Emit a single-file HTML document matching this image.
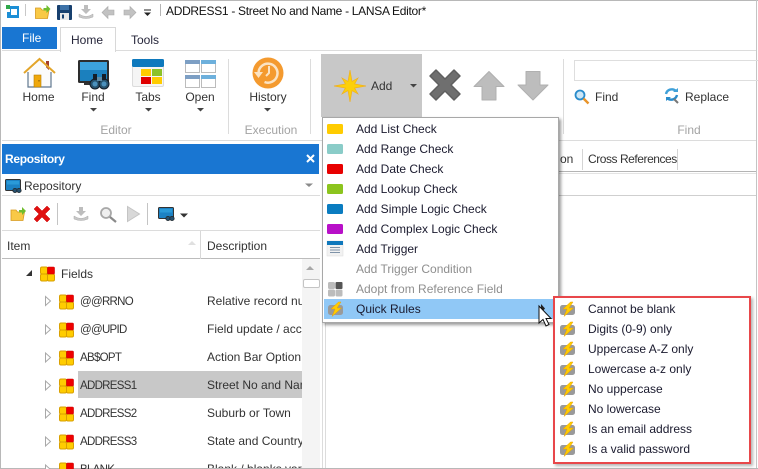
<!DOCTYPE html>
<html><head><meta charset="utf-8">
<style>
html,body{margin:0;padding:0;background:#fff}
#r{position:relative;width:758px;height:469px;overflow:hidden;background:#fff;font-family:"Liberation Sans",sans-serif;font-size:12px;color:#333}
.t{position:absolute;white-space:nowrap;line-height:16px}
.b{position:absolute}
.c{transform:translateX(-50%)}
.g{color:#a3a3a3}
.m{color:#1a1a2e}
.d{color:#8e8e8e}
.k{font-size:11.5px;letter-spacing:-.7px}
svg{position:absolute;left:0;top:0}
</style></head><body><div id="r">

<!-- base lines -->
<div class="b" style="left:2px;top:50px;width:754px;height:1px;background:#dcdcdc"></div>
<div class="b" style="left:2px;top:140px;width:754px;height:1px;background:#dcdcdc"></div>
<div class="b" style="left:0;top:0;width:758px;height:1px;background:#b8b8b8"></div>
<div class="b" style="left:0;top:0;width:1px;height:469px;background:#b8b8b8"></div>
<div class="b" style="left:756px;top:0;width:1px;height:469px;background:#c4c4c4"></div>
<div class="b" style="left:0;top:468px;width:758px;height:1px;background:#b8b8b8"></div>

<!-- tabs -->
<div class="b" style="left:2px;top:27px;width:55px;height:22px;background:#1976d2"></div>
<div class="t" style="left:22px;top:30px;color:#fff">File</div>
<div class="b" style="left:60px;top:27px;width:54px;height:24px;background:#fff;border:1px solid #d8d8d8;border-bottom:0;box-sizing:content-box"></div>
<div class="t" style="left:71px;top:32px;color:#26263a">Home</div>
<div class="t" style="left:131px;top:32px;color:#26263a">Tools</div>
<div class="t" style="left:166px;top:3px;color:#111;letter-spacing:-.3px">ADDRESS1 - Street No and Name - LANSA Editor*</div>

<!-- ribbon labels -->
<div class="t c" style="left:38.500px;top:89px">Home</div>
<div class="t c" style="left:93px;top:89px">Find</div>
<div class="t c" style="left:148px;top:89px">Tabs</div>
<div class="t c" style="left:200px;top:89px">Open</div>
<div class="t c" style="left:268px;top:89px">History</div>
<div class="t c g" style="left:116px;top:122px">Editor</div>
<div class="t c g" style="left:271px;top:122px">Execution</div>

<!-- add button -->
<div class="b" style="left:321px;top:54px;width:101px;height:63px;background:#c8c8c8"></div>
<div class="t" style="left:371px;top:78px">Add</div>

<!-- find group -->
<div class="b" style="left:574px;top:60px;width:190px;height:19px;border:1px solid #dedede"></div>
<div class="t" style="left:595px;top:89px">Find</div>
<div class="t" style="left:685px;top:89px">Replace</div>
<div class="t c g" style="left:689px;top:122px">Find</div>

<!-- right tabs -->
<div class="t" style="left:560px;top:151px">on</div>
<div class="t" style="left:588px;top:151px;letter-spacing:-.45px">Cross References</div>
<div class="b" style="left:582px;top:149px;width:1px;height:21px;background:#d4d4d4"></div>
<div class="b" style="left:677px;top:149px;width:1px;height:21px;background:#d4d4d4"></div>
<div class="b" style="left:558px;top:171px;width:198px;height:1px;background:#b4b4b4"></div>
<div class="b" style="left:558px;top:173px;width:198px;height:1px;background:#e4e4e4"></div>
<div class="b" style="left:558px;top:195px;width:198px;height:1px;background:#cfcfcf"></div>
<div class="b" style="left:322px;top:320px;width:1px;height:148px;background:#dcdcdc"></div>
<div class="b" style="left:325px;top:320px;width:1px;height:148px;background:#dcdcdc"></div>

<!-- repository panel -->
<div class="b" style="left:2px;top:144px;width:317px;height:30px;background:#1976d2"></div>
<div class="t" style="left:5px;top:151px;color:#fff;font-weight:bold;letter-spacing:-.3px">Repository</div>
<div class="t" style="left:24px;top:178px">Repository</div>
<div class="b" style="left:2px;top:195px;width:318px;height:1px;background:#dcdcdc"></div>
<div class="b" style="left:2px;top:230px;width:318px;height:1px;background:#dcdcdc"></div>
<div class="b" style="left:2px;top:258px;width:318px;height:1px;background:#bcbcbc"></div>
<div class="b" style="left:200px;top:231px;width:1px;height:28px;background:#d8d8d8"></div>
<div class="t" style="left:7px;top:238px">Item</div>
<div class="t" style="left:207px;top:238px">Description</div>

<!-- scrollbar + selection -->
<div class="b" style="left:78px;top:371px;width:224px;height:27px;background:#c8c8c8"></div>
<div class="b" style="left:302px;top:259px;width:18px;height:209px;background:#f4f4f4"></div>
<div class="b" style="left:303px;top:279px;width:15px;height:7px;background:#fff;border:1px solid #c4c4c4;border-radius:2px"></div>

<!-- tree -->
<div class="t" style="left:61px;top:266px">Fields</div>
<div class="t k" style="left:80px;top:294px">@@RRNO</div>
<div class="t k" style="left:80px;top:322px">@@UPID</div>
<div class="t k" style="left:80px;top:350px">AB$OPT</div>
<div class="t k" style="left:80px;top:378px">ADDRESS1</div>
<div class="t k" style="left:80px;top:406px">ADDRESS2</div>
<div class="t k" style="left:80px;top:434px">ADDRESS3</div>
<div class="t k" style="left:80px;top:462px">BLANK</div>
<div class="b" style="left:207px;top:290px;width:95px;height:178px;overflow:hidden">
<div class="t" style="left:0;top:3px">Relative record number</div>
<div class="t" style="left:0;top:31px">Field update / access</div>
<div class="t" style="left:0;top:59px">Action Bar Option</div>
<div class="t" style="left:0;top:87px">Street No and Name</div>
<div class="t" style="left:0;top:115px">Suburb or Town</div>
<div class="t" style="left:0;top:143px">State and Country</div>
<div class="t" style="left:0;top:171px">Blank / blanks variable</div>
</div>

<!-- icons base layer -->
<svg width="758" height="469" viewBox="0 0 758 469">
<defs>
<g id="fld"><rect x="0" y="0" width="7" height="7" rx="1.500" fill="#fc0" stroke="#d9a000"/><rect x="7" y="7" width="7" height="7" rx="1.500" fill="#fc0" stroke="#d9a000"/><rect x="0" y="7" width="7" height="7" rx="1.500" fill="#fc0" stroke="#d9a000"/><rect x="7" y="0" width="7" height="7" rx="1" fill="#e00" stroke="#c00" stroke-width=".6"/></g>
<path id="tri" d="M0 0l5 4.500l-5 4.500z" fill="#fff" stroke="#a8a8a8"/>
<g id="mon"><rect x=".5" y=".5" width="15" height="11" rx="1" fill="#1c82c4" stroke="#333"/><rect x="2" y="2" width="12" height="3.500" fill="#2a9ad8"/><circle cx="10" cy="11.500" r="2.200" fill="#26506e" stroke="#222" stroke-width=".7"/><circle cx="14" cy="11.500" r="2.200" fill="#26506e" stroke="#222" stroke-width=".7"/></g>
<g id="folder"><path d="M1 4h5l1.500 2h7l-1.500 8.500h-12z" fill="#f9c946" stroke="#d79a20" stroke-width=".8"/><path d="M9 4h3V1l4 4l-4 4V6.500H9z" fill="#6fbd2e"/></g>
<g id="dl"><path d="M6 1h4v4h3l-5 5l-5-5h3z" fill="#bdbdbd"/><path d="M1 10q7 5 14 0v3q-7 3-14 0z" fill="#c8c8c8" stroke="#aaa" stroke-width=".5"/></g>
</defs>

<!-- title bar -->
<rect x="7" y="6" width="12" height="12" fill="#1c8fd6"/><rect x="11" y="9" width="6" height="6" fill="#fff"/><rect x="6" y="5" width="4" height="4" fill="#2fa84a"/><rect x="6" y="9" width="4" height="3" fill="#fff"/>
<rect x="25" y="4" width="1" height="12" fill="#c8c8c8"/>
<use href="#folder" x="34.500" y="4"/>
<rect x="57" y="5" width="15" height="15" rx="1" fill="#17406e"/><rect x="60" y="5" width="9" height="5" fill="#3d72a8"/><rect x="60" y="13" width="9" height="7" fill="#e8e8e8"/><rect x="62" y="14.500" width="2" height="4" fill="#17406e"/>
<use href="#dl" x="78" y="4"/>
<path d="M102 12.500l6-6v3.500h6v5h-6v3.500z" fill="#c2c2c2" stroke="#aaa" stroke-width=".6"/>
<path d="M136 12.500l-6-6v3.500h-6v5h6v3.500z" fill="#c2c2c2" stroke="#aaa" stroke-width=".6"/>
<path d="M144 12.500h7l-3.500 3.500z" fill="#222"/><rect x="144" y="9.500" width="7" height="1" fill="#222"/>
<rect x="160" y="4" width="1" height="12" fill="#b4b4b4"/>

<!-- home -->
<rect x="46" y="61" width="3" height="9" fill="#a33c2e"/>
<path d="M28 72v15h23V72l-11.500-11z" fill="#fbfbfb"/>
<path d="M28 72v15h23V72" fill="none" stroke="#607890" stroke-width="1.200"/>
<path d="M24 73l15.500-14l15.500 14" fill="none" stroke="#e3a52a" stroke-width="2"/>
<rect x="34" y="75" width="7" height="12" fill="#efa80c" stroke="#b87d00" stroke-width=".6"/>
<rect x="38.500" y="80" width="1" height="1.500" fill="#7a5000"/>
<!-- find -->
<rect x="78" y="60" width="31" height="23" rx="1.500" fill="#2d2d2d"/>
<rect x="80" y="62" width="27" height="19" fill="#1b80be"/>
<rect x="80" y="62" width="27" height="8" fill="#3ca2dc"/>
<rect x="84" y="83" width="12" height="2" fill="#333"/>
<circle cx="95" cy="84" r="5" fill="#27536f" stroke="#151e28"/><circle cx="104" cy="84" r="5" fill="#27536f" stroke="#151e28"/><circle cx="95" cy="84" r="2.500" fill="#4b91bd"/><circle cx="104" cy="84" r="2.500" fill="#4b91bd"/>
<rect x="93" y="74" width="4" height="6" fill="#151e28"/><rect x="102" y="74" width="4" height="6" fill="#151e28"/><rect x="97" y="77" width="5" height="4" fill="#5e8ba6"/>
<!-- tabs -->
<rect x="132.500" y="59.500" width="31" height="27" rx="1.500" fill="#f5f5f5" stroke="#dcdcdc"/>
<rect x="132" y="59" width="32" height="8" rx="1.500" fill="#0e79bd"/>
<rect x="141" y="69" width="10" height="7" fill="#fc0"/><rect x="152" y="69" width="10" height="7" fill="#8cc228"/><rect x="141" y="77" width="10" height="7" fill="#e00000"/><rect x="152" y="77" width="10" height="7" fill="#fc0"/>
<!-- open -->
<g fill="#fff" stroke="#bcbcbc"><rect x="185.500" y="60.500" width="14" height="12"/><rect x="201.500" y="60.500" width="14" height="12"/><rect x="185.500" y="75.500" width="14" height="12"/><rect x="201.500" y="75.500" width="14" height="12"/></g>
<rect x="185" y="60" width="15" height="4" fill="#7d9fc4"/><rect x="201" y="60" width="15" height="4" fill="#6db0dc"/><rect x="185" y="75" width="15" height="4" fill="#7d9fc4"/><rect x="201" y="75" width="15" height="4" fill="#6db0dc"/>
<!-- history -->
<circle cx="268" cy="73" r="15.500" fill="#f49a2f"/>
<path d="M258.500 73a9.500 9.500 0 1 1 6 9" fill="none" stroke="#fbe3c3" stroke-width="2.500"/>
<path d="M254 72h9l-4.500 6z" fill="#fbe3c3"/>
<path d="M269 66v7l-3 3" fill="none" stroke="#fbe3c3" stroke-width="2"/>
<!-- seps -->
<rect x="228" y="59" width="1" height="75" fill="#dcdcdc"/><rect x="310" y="59" width="1" height="75" fill="#dcdcdc"/><rect x="563" y="59" width="1" height="75" fill="#dcdcdc"/>
<!-- carets -->
<g fill="#444"><path d="M90 108h7l-3.500 3.500z"/><path d="M145 108h7l-3.500 3.500z"/><path d="M197 108h7l-3.500 3.500z"/><path d="M264 108h7l-3.500 3.500z"/><path d="M410 84h7l-3.500 3.500z"/></g>
<!-- star -->
<path d="M350 70L352 81.400L358 78L354.600 84L366 86L354.600 88L358 94L352 90.600L350 102L348 90.600L342 94L345.400 88L334 86L345.400 84L342 78L348 81.400Z" fill="#fcd00a" stroke="#f0b020" stroke-width=".7"/>
<!-- X up down -->
<path d="M436 70l9 9l9-9l6 6l-9 9l9 9l-6 6l-9-9l-9 9l-6-6l9-9l-9-9z" fill="#6f6f6f" stroke="#5f5f5f" stroke-linejoin="round" stroke-width="1.500"/>
<path d="M489 71.500l15 15h-8v13.500h-14v-13.500h-8z" fill="#bdbdbd" stroke="#b0b0b0" stroke-linejoin="round"/>
<path d="M526 71.500h14v13.500h8l-15 15l-15-15h8z" fill="#bdbdbd" stroke="#b0b0b0" stroke-linejoin="round"/>
<!-- find icons -->
<circle cx="580" cy="95" r="4.500" fill="#cde7f7" stroke="#2a8ccb" stroke-width="1.800"/><path d="M583.500 98.500l5 5" stroke="#e8942a" stroke-width="2.400"/>
<path d="M666 94a6 6 0 0 1 10-3" fill="none" stroke="#3fa0d8" stroke-width="2.400"/><path d="M677 95a6 6 0 0 1-10 3" fill="none" stroke="#2a8ccb" stroke-width="2.400"/><path d="M673 92h5v-4z" fill="#3fa0d8"/><path d="M671 97h-5v4z" fill="#2a8ccb"/><path d="M674 99l4 4" stroke="#777" stroke-width="2"/>

<!-- repository -->
<path d="M307 155l7 7M314 155l-7 7" stroke="#fff" stroke-width="2"/>
<use href="#mon" x="5" y="179"/>
<path d="M305 183.500h8l-4 3.500z" fill="#8a8a8a"/>
<use href="#folder" x="10" y="206"/>
<path d="M37 206l5 5l5-5l3 3l-5 5l5 5l-3 3l-5-5l-5 5l-3-3l5-5l-5-5z" fill="#e01010" stroke="#c00" stroke-width=".5"/>
<rect x="57" y="203" width="1" height="22" fill="#c4c4c4"/>
<use href="#dl" x="73" y="206"/>
<circle cx="106" cy="213" r="5" fill="#efefef" stroke="#a8a8a8" stroke-width="1.800"/><path d="M110 217l6 5" stroke="#8a8a8a" stroke-width="2.200"/>
<path d="M127.500 206.500l12 7.500l-12 7.500z" fill="#d8d8d8" stroke="#c4c4c4"/>
<rect x="147" y="203" width="1" height="22" fill="#c4c4c4"/>
<use href="#mon" x="158" y="207"/>
<path d="M180 213.500h8l-4 4z" fill="#333"/>
<path d="M188 245h8l-4-4z" fill="#e0e0e0"/>
<path d="M306 270h8l-4-4z" fill="#a8a8a8"/>

<!-- tree icons -->
<path d="M32 270v6h-6z" fill="#333"/>
<use href="#fld" x="40.500" y="267"/>
<g><use href="#tri" x="45.500" y="296.500"/><use href="#tri" x="45.500" y="325"/><use href="#tri" x="45.500" y="353"/><use href="#tri" x="45.500" y="381"/><use href="#tri" x="45.500" y="409"/><use href="#tri" x="45.500" y="437"/><use href="#tri" x="45.500" y="465"/></g>
<use href="#fld" x="59.500" y="295"/><use href="#fld" x="59.500" y="323"/><use href="#fld" x="59.500" y="351"/><use href="#fld" x="59.500" y="379"/><use href="#fld" x="59.500" y="407"/><use href="#fld" x="59.500" y="435"/><use href="#fld" x="59.500" y="463"/>
</svg>

<!-- main menu -->
<div class="b" style="left:322px;top:117px;width:235px;height:204px;background:#fff;border:1px solid #a8a8a8;box-shadow:2px 2px 3px rgba(0,0,0,.4)"></div>
<div class="b" style="left:324px;top:299px;width:229px;height:20px;background:#90c8f6"></div>
<div class="t m" style="left:356px;top:121px">Add List Check</div>
<div class="t m" style="left:356px;top:141px">Add Range Check</div>
<div class="t m" style="left:356px;top:161px">Add Date Check</div>
<div class="t m" style="left:356px;top:181px">Add Lookup Check</div>
<div class="t m" style="left:356px;top:201px">Add Simple Logic Check</div>
<div class="t m" style="left:356px;top:221px">Add Complex Logic Check</div>
<div class="t m" style="left:356px;top:241px">Add Trigger</div>
<div class="t d" style="left:356px;top:261px">Add Trigger Condition</div>
<div class="t d" style="left:356px;top:281px">Adopt from Reference Field</div>
<div class="t m" style="left:356px;top:301px">Quick Rules</div>

<!-- sub menu -->
<div class="b" style="left:553px;top:296px;width:194px;height:164px;background:#fff;border:2px solid #e8474a;box-shadow:2px 2px 3px rgba(0,0,0,.3)"></div>
<div class="t m" style="left:588px;top:301px">Cannot be blank</div>
<div class="t m" style="left:588px;top:321px">Digits (0-9) only</div>
<div class="t m" style="left:588px;top:341px">Uppercase A-Z only</div>
<div class="t m" style="left:588px;top:361px">Lowercase a-z only</div>
<div class="t m" style="left:588px;top:381px">No uppercase</div>
<div class="t m" style="left:588px;top:401px">No lowercase</div>
<div class="t m" style="left:588px;top:421px">Is an email address</div>
<div class="t m" style="left:588px;top:441px">Is a valid password</div>

<svg width="758" height="469" viewBox="0 0 758 469">
<defs>
<g id="qr"><rect x="0" y="3" width="15" height="10" rx="2.500" fill="#9a9a9a"/><path d="M10.500 0L3 7h4L4 14.500l9.500-8.500H9L13 0z" fill="#fc0" stroke="#eaa000" stroke-width=".5"/></g>
</defs>
<rect x="327" y="124" width="16" height="10" rx="1.500" fill="#fc0"/>
<rect x="327" y="144" width="16" height="10" rx="1.500" fill="#8accc8"/>
<rect x="327" y="164" width="16" height="10" rx="1.500" fill="#e80000"/>
<rect x="327" y="184" width="16" height="10" rx="1.500" fill="#8cc41e"/>
<rect x="327" y="204" width="16" height="10" rx="1.500" fill="#0a7cc0"/>
<rect x="327" y="224" width="16" height="10" rx="1.500" fill="#b810c8"/>
<rect x="327" y="241" width="16" height="15" fill="#f2f2f2" stroke="#ddd" stroke-width=".5"/><rect x="327" y="241" width="16" height="4" fill="#0f78bc"/><path d="M330 247.500h10M330 250h10M330 252.500h10" stroke="#7f93a8"/>
<g fill="#bcbcbc"><rect x="328" y="282" width="7" height="7" rx="1.500"/><rect x="328" y="289.500" width="7" height="7" rx="1.500"/><rect x="335.500" y="289.500" width="7" height="7" rx="1.500"/></g><rect x="335.500" y="282" width="7" height="7" rx="1" fill="#555"/>
<use href="#qr" x="328" y="302"/>
<path d="M541 304l4 4.500l-4 4.500z" fill="#222"/>
<path d="M539 306v17l4-3.500l3 6.500l3-1.500l-3-6h5z" fill="#fff" stroke="#111" stroke-width="1"/>
<use href="#qr" x="560" y="302"/><use href="#qr" x="560" y="322"/><use href="#qr" x="560" y="342"/><use href="#qr" x="560" y="362"/><use href="#qr" x="560" y="382"/><use href="#qr" x="560" y="402"/><use href="#qr" x="560" y="422"/><use href="#qr" x="560" y="442"/>
</svg>
</div></body></html>
